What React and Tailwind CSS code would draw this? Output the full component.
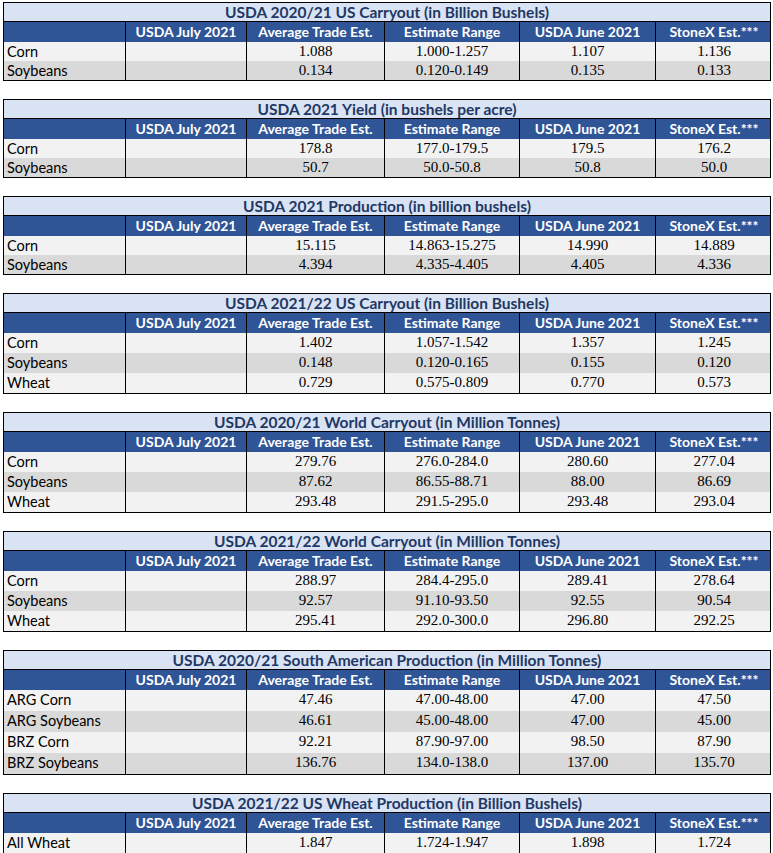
import React from "react";

const COLUMNS = ["", "USDA July 2021", "Average Trade Est.", "Estimate Range", "USDA June 2021", "StoneX Est.***"];

// rowH: the source image is a scaled Excel grab, so row heights drift a little per table
const TABLES = [
  {
    title: "USDA 2020/21 US Carryout (in Billion Bushels)",
    rowH: "h-[19px]",
    rows: [
      ["Corn", "1.088", "1.000-1.257", "1.107", "1.136"],
      ["Soybeans", "0.134", "0.120-0.149", "0.135", "0.133"],
    ],
  },
  {
    title: "USDA 2021 Yield (in bushels per acre)",
    rowH: "h-[19px]",
    rows: [
      ["Corn", "178.8", "177.0-179.5", "179.5", "176.2"],
      ["Soybeans", "50.7", "50.0-50.8", "50.8", "50.0"],
    ],
  },
  {
    title: "USDA 2021 Production (in billion bushels)",
    rowH: "h-[19px]",
    rows: [
      ["Corn", "15.115", "14.863-15.275", "14.990", "14.889"],
      ["Soybeans", "4.394", "4.335-4.405", "4.405", "4.336"],
    ],
  },
  {
    title: "USDA 2021/22 US Carryout (in Billion Bushels)",
    rowH: "h-[20px]",
    rows: [
      ["Corn", "1.402", "1.057-1.542", "1.357", "1.245"],
      ["Soybeans", "0.148", "0.120-0.165", "0.155", "0.120"],
      ["Wheat", "0.729", "0.575-0.809", "0.770", "0.573"],
    ],
  },
  {
    title: "USDA 2020/21 World Carryout (in Million Tonnes)",
    rowH: "h-[20px]",
    rows: [
      ["Corn", "279.76", "276.0-284.0", "280.60", "277.04"],
      ["Soybeans", "87.62", "86.55-88.71", "88.00", "86.69"],
      ["Wheat", "293.48", "291.5-295.0", "293.48", "293.04"],
    ],
  },
  {
    title: "USDA 2021/22 World Carryout (in Million Tonnes)",
    rowH: "h-[20px]",
    rows: [
      ["Corn", "288.97", "284.4-295.0", "289.41", "278.64"],
      ["Soybeans", "92.57", "91.10-93.50", "92.55", "90.54"],
      ["Wheat", "295.41", "292.0-300.0", "296.80", "292.25"],
    ],
  },
  {
    title: "USDA 2020/21 South American Production (in Million Tonnes)",
    rowH: "h-[21px]",
    rows: [
      ["ARG Corn", "47.46", "47.00-48.00", "47.00", "47.50"],
      ["ARG Soybeans", "46.61", "45.00-48.00", "47.00", "45.00"],
      ["BRZ Corn", "92.21", "87.90-97.00", "98.50", "87.90"],
      ["BRZ Soybeans", "136.76", "134.0-138.0", "137.00", "135.70"],
    ],
  },
  {
    title: "USDA 2021/22 US Wheat Production (in Billion Bushels)",
    rowH: "h-[20px]",
    rows: [["All Wheat", "1.847", "1.724-1.947", "1.898", "1.724"]],
  },
];

const GRID = "grid grid-cols-[121px_121px_138px_135px_136px_117px]";
const CALIBRI = "font-['Lato','Open_Sans',sans-serif]";
const SERIF = "font-['Liberation_Serif','Times_New_Roman',serif]";

function ReportTable({ table }) {
  return (
    <div className="w-[768px]">
      <div
        className={`h-[20px] border border-black bg-[#dae3f3] text-center text-[15.5px] font-bold leading-[18px] text-[#1f3864] ${CALIBRI}`}
      >
        {table.title}
      </div>
      <div className={`${GRID} h-[20px] bg-[#2f5597] border-x border-black ${CALIBRI}`}>
        {COLUMNS.map((c, i) => (
          <div
            key={i}
            className={`text-center text-[14px] font-bold leading-[19px] text-white ${i > 0 ? "border-l border-black" : ""}`}
          >
            {c}
          </div>
        ))}
      </div>
      <div className="border-x border-b border-black">
        {table.rows.map((row, r) => {
          const [label, avg, range, june, stonex] = row;
          return (
            <div key={r} className={`${GRID} ${table.rowH} ${r % 2 === 0 ? "bg-[#f2f2f2]" : "bg-[#d9d9d9]"}`}>
              <div className={`pl-[3px] text-[14.5px] leading-[19px] text-black ${CALIBRI}`}>{label}</div>
              <div className="border-l border-black"></div>
              {[avg, range, june, stonex].map((v, i) => (
                <div key={i} className={`border-l border-black text-center text-[15px] leading-[19px] text-black ${SERIF}`}>
                  {v}
                </div>
              ))}
            </div>
          );
        })}
      </div>
    </div>
  );
}

export default function App() {
  return (
    <div className="w-[773px] h-[853px] overflow-hidden bg-white pl-[3px] pt-[2px]">
      <div className="flex flex-col gap-[18px]">
        {TABLES.map((t, i) => (
          <ReportTable key={i} table={t} />
        ))}
      </div>
    </div>
  );
}
